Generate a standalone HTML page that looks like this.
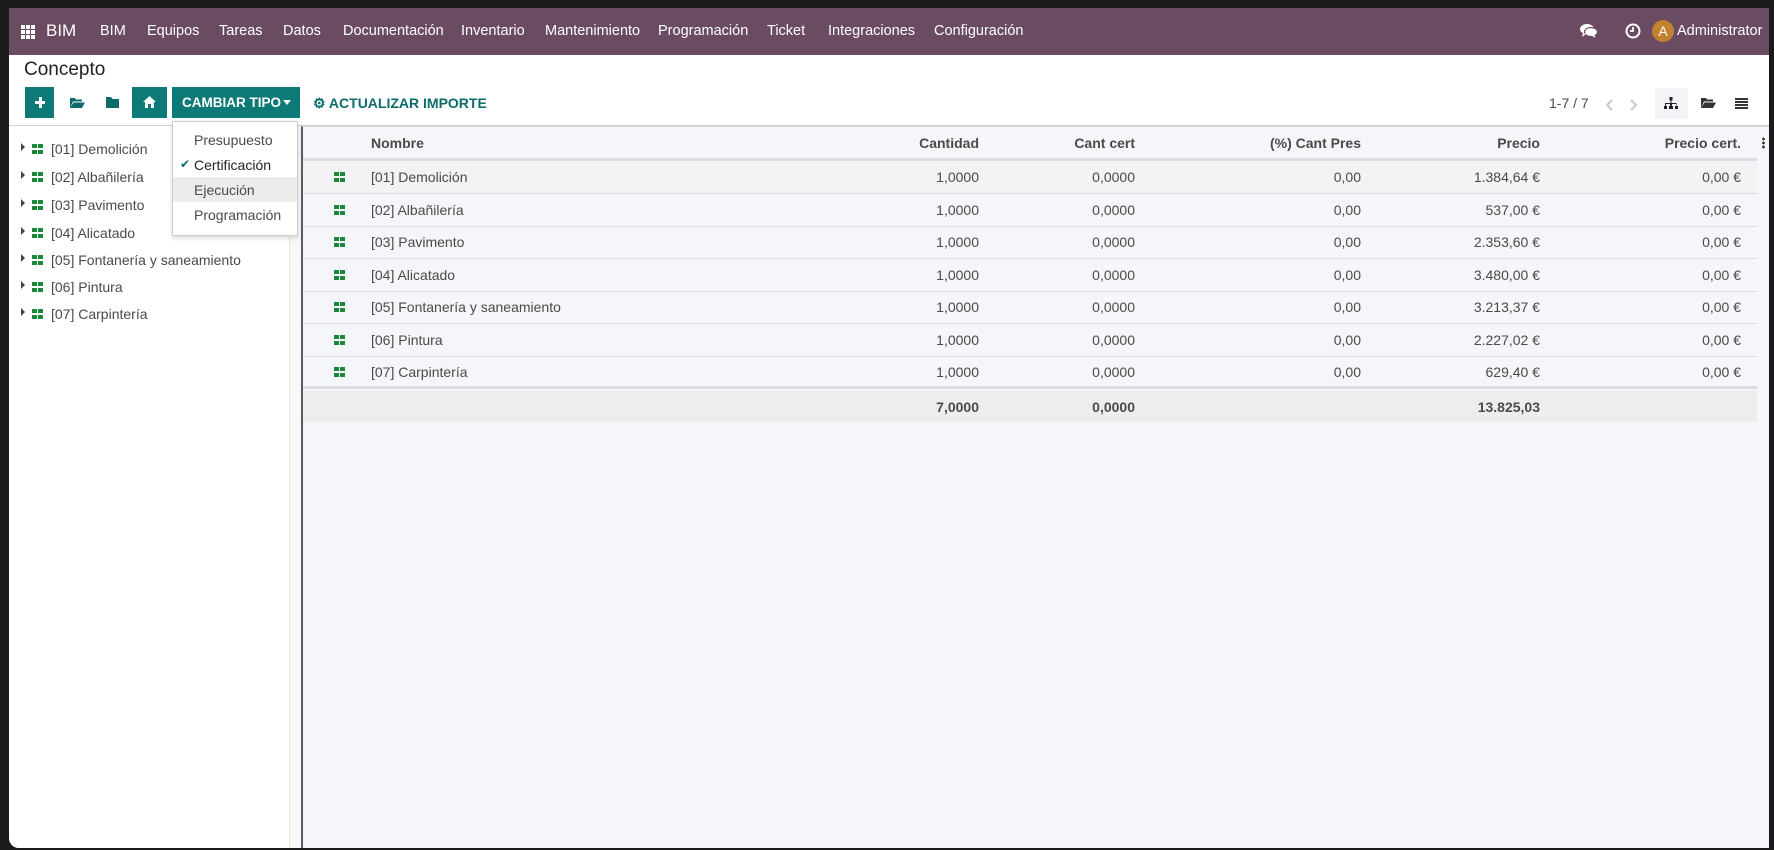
<!DOCTYPE html>
<html><head><meta charset="utf-8"><style>
*{box-sizing:border-box;margin:0;padding:0}
body{width:1774px;height:850px;background:#1b1b1d;font-family:"Liberation Sans",sans-serif;color:#4a4a4a;position:relative;overflow:hidden}
.app{position:absolute;left:9px;top:8px;width:1760px;height:840px;background:#fff;border-radius:0 0 0 10px;overflow:hidden}
.nav{position:absolute;left:0;top:0;width:100%;height:47px;background:#6b4b62;color:#fff;font-size:14.5px}
.nav span{position:absolute;top:15px;white-space:nowrap}
.abs{position:absolute}
.btn{position:absolute;top:79px;height:31px;background:#0d7a78;color:#fff}
.side{position:absolute;left:0;top:118px;width:281px;height:722px;background:#fff;border-right:1px solid #e4e4e4}
.gap{position:absolute;left:281px;top:118px;width:13px;height:722px;background:#f8f8f8}
.tbl{position:absolute;left:292px;top:118px;width:1468px;height:722px;background:#f5f6f9;border-left:2px solid #5b5b66;border-top:1px solid #d6d6d6}
.row{position:absolute;left:0;width:1454px;height:33px;border-bottom:1px solid #dcdde2;font-size:14px}
.row span{position:absolute;top:8px;white-space:nowrap}
.r{text-align:right}
.ic{position:absolute;width:11px;height:10px;background:linear-gradient(#1a8a3a,#1a8a3a) 0 0/5px 4px no-repeat,linear-gradient(#1a8a3a,#1a8a3a) 6px 0/5px 4px no-repeat,linear-gradient(#1a8a3a,#1a8a3a) 0 6px/5px 4px no-repeat,linear-gradient(#1a8a3a,#1a8a3a) 6px 6px/5px 4px no-repeat}
.si{position:absolute;font-size:14px;white-space:nowrap}
.caret{position:absolute;width:0;height:0;border-left:4px solid #444;border-top:4px solid transparent;border-bottom:4px solid transparent}
</style></head><body>
<div class="app">
<div class="nav">
<div class="abs" style="left:12px;top:17px;width:14px;height:14px;background:linear-gradient(#fff,#fff) 0 0/4px 4px,linear-gradient(#fff,#fff) 5px 0/4px 4px,linear-gradient(#fff,#fff) 10px 0/4px 4px,linear-gradient(#fff,#fff) 0 5px/4px 4px,linear-gradient(#fff,#fff) 5px 5px/4px 4px,linear-gradient(#fff,#fff) 10px 5px/4px 4px,linear-gradient(#fff,#fff) 0 10px/4px 4px,linear-gradient(#fff,#fff) 5px 10px/4px 4px,linear-gradient(#fff,#fff) 10px 10px/4px 4px;background-repeat:no-repeat"></div>
<span style="left:37px;top:13px;font-size:17px">BIM</span>
<span style="left:91px">BIM</span><span style="left:138px">Equipos</span><span style="left:210px">Tareas</span><span style="left:274px">Datos</span><span style="left:334px">Documentación</span><span style="left:452px">Inventario</span><span style="left:536px">Mantenimiento</span><span style="left:649px">Programación</span><span style="left:758px">Ticket</span><span style="left:819px">Integraciones</span><span style="left:925px">Configuración</span>
<svg class="abs" style="left:1571px;top:15px" width="18" height="16" viewBox="0 0 18 16"><ellipse cx="7" cy="6" rx="7" ry="5" fill="#fff"/><ellipse cx="11" cy="9" rx="6.5" ry="4.5" fill="#fff" stroke="#6b4b62" stroke-width="1.2"/><path d="M3 10l-1 4 4-3zM14 12l2 3-4-2z" fill="#fff"/></svg>
<svg class="abs" style="left:1616px;top:15px" width="16" height="16"><circle cx="8" cy="8" r="6.5" fill="none" stroke="#fff" stroke-width="2"/><path d="M8 4v4H5" stroke="#fff" stroke-width="1.8" fill="none"/></svg>
<div class="abs" style="left:1643px;top:12px;width:22px;height:22px;border-radius:50%;background:#c2822d;font-size:14px;text-align:center;line-height:22px">A</div>
<span style="left:1668px">Administrator</span>
</div>
<div class="abs" style="left:15px;top:51px;font-size:19px;color:#222">Concepto</div>
<div class="btn" style="left:16px;width:29px"><div class="abs" style="left:10px;top:14px;width:10px;height:3px;background:#fff"></div><div class="abs" style="left:13.5px;top:10px;width:3px;height:11px;background:#fff"></div></div>
<svg class="abs" style="left:61px;top:89px" width="15" height="11"><path d="M0 1h5l1 1.5h6v2H3L0 11z M3.5 5.5H15L12 11H0z" fill="#0d6b6b"/></svg>
<svg class="abs" style="left:97px;top:89px" width="13" height="11"><path d="M0 0h5l1.5 2H13v9H0z" fill="#0d6b6b"/></svg>
<div class="btn" style="left:123px;width:35px"><svg class="abs" style="left:11px;top:9px" width="13" height="12"><path d="M6.5 0L13 6h-2v6H8V8H5v4H2V6H0z" fill="#fff"/></svg></div>
<div class="btn" style="left:163px;width:128px;font-size:13.5px;font-weight:bold;line-height:31px;padding-left:10px">CAMBIAR TIPO<span class="abs" style="right:9px;top:13px;border-top:5px solid #fff;border-left:4px solid transparent;border-right:4px solid transparent"></span></div>
<div class="abs" style="left:304px;top:87px;font-size:14px;font-weight:bold;color:#0d6b6b">⚙ ACTUALIZAR IMPORTE</div>
<div class="abs" style="left:1540px;top:87px;font-size:14px">1-7 / 7</div>
<svg class="abs" style="left:1597px;top:90px" width="40" height="14"><path d="M6 2L1 7l5 5M25 2l5 5-5 5" stroke="#c8c8c8" stroke-width="2" fill="none"/></svg>
<div class="abs" style="left:1646px;top:80px;width:33px;height:31px;background:#f3f4f7"></div>
<svg class="abs" style="left:1655px;top:89px" width="14" height="13"><path d="M5.5 0h3v3.5h-1V6h5v3h1.5v3h-3V9h1V7H8v2h1v3H5V9h1V7H2v2h1v3H0V9h1V6h5.5V3.5h-1z" fill="#222"/></svg>
<svg class="abs" style="left:1692px;top:89px" width="15" height="11"><path d="M0 1h5l1 1.5h6v2H3L0 11z M3.5 5.5H15L12 11H0z" fill="#333"/></svg>
<div class="abs" style="left:1726px;top:90px;width:13px;height:11px;background:repeating-linear-gradient(#333 0 2px,transparent 2px 3px)"></div>
<div class="abs" style="left:0;top:117px;width:1760px;height:1px;background:#d0d0d0"></div>
<div class="side">
<div class="caret" style="left:12px;top:17px"></div><div class="ic" style="left:23px;top:18px"></div><div class="si" style="left:42px;top:15px">[01] Demolición</div>
<div class="caret" style="left:12px;top:45px"></div><div class="ic" style="left:23px;top:46px"></div><div class="si" style="left:42px;top:43px">[02] Albañilería</div>
<div class="caret" style="left:12px;top:73px"></div><div class="ic" style="left:23px;top:74px"></div><div class="si" style="left:42px;top:71px">[03] Pavimento</div>
<div class="caret" style="left:12px;top:101px"></div><div class="ic" style="left:23px;top:102px"></div><div class="si" style="left:42px;top:99px">[04] Alicatado</div>
<div class="caret" style="left:12px;top:128px"></div><div class="ic" style="left:23px;top:129px"></div><div class="si" style="left:42px;top:126px">[05] Fontanería y saneamiento</div>
<div class="caret" style="left:12px;top:155px"></div><div class="ic" style="left:23px;top:156px"></div><div class="si" style="left:42px;top:153px">[06] Pintura</div>
<div class="caret" style="left:12px;top:182px"></div><div class="ic" style="left:23px;top:183px"></div><div class="si" style="left:42px;top:180px">[07] Carpintería</div>
</div>
<div class="gap"></div>
<div class="tbl">
<div class="row" style="top:0;height:34px;border-bottom:3px solid #dcdde2;font-weight:bold"><span style="left:68px">Nombre</span><span class="r" style="right:778px">Cantidad</span><span class="r" style="right:622px">Cant cert</span><span class="r" style="right:396px">(%) Cant Pres</span><span class="r" style="right:217px">Precio</span><span class="r" style="right:16px">Precio cert.</span></div>
<div class="abs" style="left:1459px;top:10px;width:3px;height:12px;background:radial-gradient(circle,#333 1.3px,transparent 1.5px) 0 0/3px 4px"></div>
<div class="row" style="top:34px;background:#f3f3f5"><div class="ic" style="left:31px;top:11px"></div><span style="left:68px">[01] Demolición</span><span style="right:778px">1,0000</span><span style="right:622px">0,0000</span><span style="right:396px">0,00</span><span style="right:217px">1.384,64 €</span><span style="right:16px">0,00 €</span></div>
<div class="row" style="top:67px"><div class="ic" style="left:31px;top:11px"></div><span style="left:68px">[02] Albañilería</span><span style="right:778px">1,0000</span><span style="right:622px">0,0000</span><span style="right:396px">0,00</span><span style="right:217px">537,00 €</span><span style="right:16px">0,00 €</span></div>
<div class="row" style="top:99px"><div class="ic" style="left:31px;top:11px"></div><span style="left:68px">[03] Pavimento</span><span style="right:778px">1,0000</span><span style="right:622px">0,0000</span><span style="right:396px">0,00</span><span style="right:217px">2.353,60 €</span><span style="right:16px">0,00 €</span></div>
<div class="row" style="top:132px"><div class="ic" style="left:31px;top:11px"></div><span style="left:68px">[04] Alicatado</span><span style="right:778px">1,0000</span><span style="right:622px">0,0000</span><span style="right:396px">0,00</span><span style="right:217px">3.480,00 €</span><span style="right:16px">0,00 €</span></div>
<div class="row" style="top:164px"><div class="ic" style="left:31px;top:11px"></div><span style="left:68px">[05] Fontanería y saneamiento</span><span style="right:778px">1,0000</span><span style="right:622px">0,0000</span><span style="right:396px">0,00</span><span style="right:217px">3.213,37 €</span><span style="right:16px">0,00 €</span></div>
<div class="row" style="top:197px"><div class="ic" style="left:31px;top:11px"></div><span style="left:68px">[06] Pintura</span><span style="right:778px">1,0000</span><span style="right:622px">0,0000</span><span style="right:396px">0,00</span><span style="right:217px">2.227,02 €</span><span style="right:16px">0,00 €</span></div>
<div class="row" style="top:229px;border-bottom:3px solid #dcdde2"><div class="ic" style="left:31px;top:11px"></div><span style="left:68px">[07] Carpintería</span><span style="right:778px">1,0000</span><span style="right:622px">0,0000</span><span style="right:396px">0,00</span><span style="right:217px">629,40 €</span><span style="right:16px">0,00 €</span></div>
<div class="row" style="top:264px;height:31px;background:#ededee;border:0;font-weight:bold"><span style="right:778px">7,0000</span><span style="right:622px">0,0000</span><span style="right:217px">13.825,03</span></div>
</div>
<div class="abs" style="left:163px;top:113px;width:126px;height:115px;background:#fff;border:1px solid #ccc;box-shadow:0 2px 5px rgba(0,0,0,.15);font-size:14px">
<div class="abs" style="left:21px;top:10px">Presupuesto</div>
<div class="abs" style="left:7px;top:35px;color:#0d6b6b;font-size:12px">✔</div><div class="abs" style="left:21px;top:35px;color:#222">Certificación</div>
<div class="abs" style="left:0;top:55px;width:124px;height:25px;background:#ececec"></div>
<div class="abs" style="left:21px;top:60px">Ejecución</div>
<div class="abs" style="left:21px;top:85px">Programación</div>
</div>
</div>
</body></html>
